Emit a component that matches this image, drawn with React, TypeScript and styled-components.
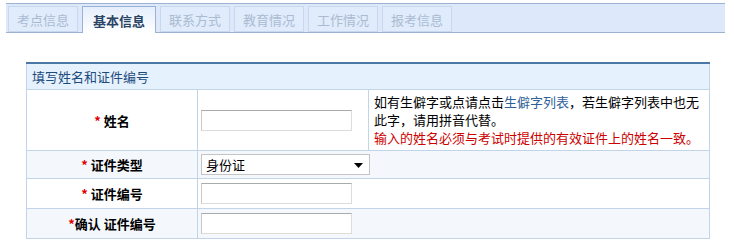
import React from 'react';
import styled, { createGlobalStyle } from 'styled-components';

const GlobalStyle = createGlobalStyle`
  body {
    margin: 0;
    background: #ffffff;
    font-family: "Noto Sans CJK SC", "Noto Sans", sans-serif;
  }
`;

const tabs = ['考点信息', '基本信息', '联系方式', '教育情况', '工作情况', '报考信息'];

type TabProps = { $active?: boolean };

const App: React.FC = () => {
    return (
        <Page>
            <GlobalStyle />
            <TabBar>
                {tabs.map((t, i) => (
                    <Tab key={t} $active={i === 1}>{t}</Tab>
                ))}
            </TabBar>
            <Section>
                <FormTable>
                    <colgroup>
                        <col style={{ width: 171 }} />
                        <col style={{ width: 171 }} />
                        <col />
                    </colgroup>
                    <tbody>
                        <tr>
                            <HeaderCell colSpan={3}>填写姓名和证件编号</HeaderCell>
                        </tr>
                        <Row $height={61}>
                            <LabelCell><Star>*</Star> 姓名</LabelCell>
                            <InputCell><TextInput /></InputCell>
                            <NoteCell>
                                如有生僻字或点请点击<NoteLink>生僻字列表</NoteLink>，若生僻字列表中也无此字，请用拼音代替。
                                <Warn>输入的姓名必须与考试时提供的有效证件上的姓名一致。</Warn>
                            </NoteCell>
                        </Row>
                        <Row $height={28} $alt>
                            <LabelCell><Star>*</Star> 证件类型</LabelCell>
                            <InputCell colSpan={2}>
                                <SelectBox>
                                    <SelectText>身份证</SelectText>
                                    <Arrow width="9" height="5" viewBox="0 0 9 5">
                                        <path d="M0 0 H9 L4.5 5 Z" fill="#000" />
                                    </Arrow>
                                </SelectBox>
                            </InputCell>
                        </Row>
                        <Row $height={30}>
                            <LabelCell><Star>*</Star> 证件编号</LabelCell>
                            <InputCell colSpan={2}><TextInput /></InputCell>
                        </Row>
                        <Row $height={30} $alt>
                            <LabelCell><Star>*</Star>确认 证件编号</LabelCell>
                            <InputCell colSpan={2}><TextInput /></InputCell>
                        </Row>
                    </tbody>
                </FormTable>
            </Section>
        </Page>
    );
};

export default App;

const Page = styled.div`
  padding: 3px 0 0 6px;
`;

const TabBar = styled.div`
  width: 717px;
  height: 28px;
  box-sizing: content-box;
  border-top: 1px solid #9cb2d3;
  border-bottom: 1px solid #9cb2d3;
  background: #dde9fb;
  display: flex;
  align-items: flex-end;
  gap: 4px;
  padding-left: 2px;
`;

const Tab = styled.div<TabProps>`
  box-sizing: border-box;
  width: ${(p) => (p.$active ? '74px' : '70px')};
  height: ${(p) => (p.$active ? '27px' : '26px')};
  margin-bottom: ${(p) => (p.$active ? '-1px' : '0')};
  border: 1px solid ${(p) => (p.$active ? '#9cb2d3' : '#c8d8ee')};
  border-bottom: ${(p) => (p.$active ? 'none' : '1px solid #c8d8ee')};
  background: ${(p) => (p.$active ? 'linear-gradient(#e4eefc, #ffffff)' : '#e0ebfb')};
  color: ${(p) => (p.$active ? '#2a4566' : '#aabbd2')};
  font-weight: ${(p) => (p.$active ? 700 : 400)};
  font-size: 13px;
  display: flex;
  align-items: center;
  justify-content: center;
`;

const Section = styled.div`
  margin: 29px 0 0 20px;
  width: 684px;
`;

const FormTable = styled.table`
  width: 684px;
  border-collapse: collapse;
  table-layout: fixed;
`;

const HeaderCell = styled.td`
  height: 25px;
  padding: 0 0 0 5px;
  border-top: 2px solid #4b79a6;
  border-left: 1px solid #c2d4e8;
  border-right: 1px solid #c2d4e8;
  border-bottom: 1px solid #c2d4e8;
  background: #e5f1fd;
  color: #1d4b7c;
  font-size: 13px;
`;

const Row = styled.tr<{ $height: number; $alt?: boolean }>`
  height: ${(p) => p.$height}px;
  background: ${(p) => (p.$alt ? '#f4f8fd' : '#ffffff')};
`;

const LabelCell = styled.td`
  border: 1px solid #c2d4e8;
  padding: 0;
  text-align: center;
  font-size: 13px;
  font-weight: 700;
  color: #000;
`;

const Star = styled.span`
  color: #e00000;
`;

const InputCell = styled.td`
  border: 1px solid #c2d4e8;
  padding: 0 0 0 3px;
`;

const TextInput = styled.input.attrs({ type: 'text' })`
  display: block;
  box-sizing: border-box;
  width: 151px;
  height: 21px;
  margin: 0;
  border: 1px solid #dcdcdc;
  border-top-color: #aaaaaa;
  border-left-color: #c8c8c8;
  background: #fff;
`;

const SelectBox = styled.div`
  position: relative;
  box-sizing: border-box;
  width: 169px;
  height: 21px;
  border: 1px solid #c4c4c4;
  background: #fff;
  display: flex;
  align-items: center;
  padding-left: 4px;
`;

const SelectText = styled.span`
  font-size: 13px;
  color: #000;
`;

const Arrow = styled.svg`
  position: absolute;
  right: 6px;
  top: 8px;
`;

const NoteCell = styled.td`
  border: 1px solid #c2d4e8;
  padding: 0 6px 0 5px;
  font-size: 13px;
  line-height: 18px;
  color: #000;
`;

const NoteLink = styled.span`
  color: #2f5f99;
`;

const Warn = styled.div`
  color: #cc0000;
`;
